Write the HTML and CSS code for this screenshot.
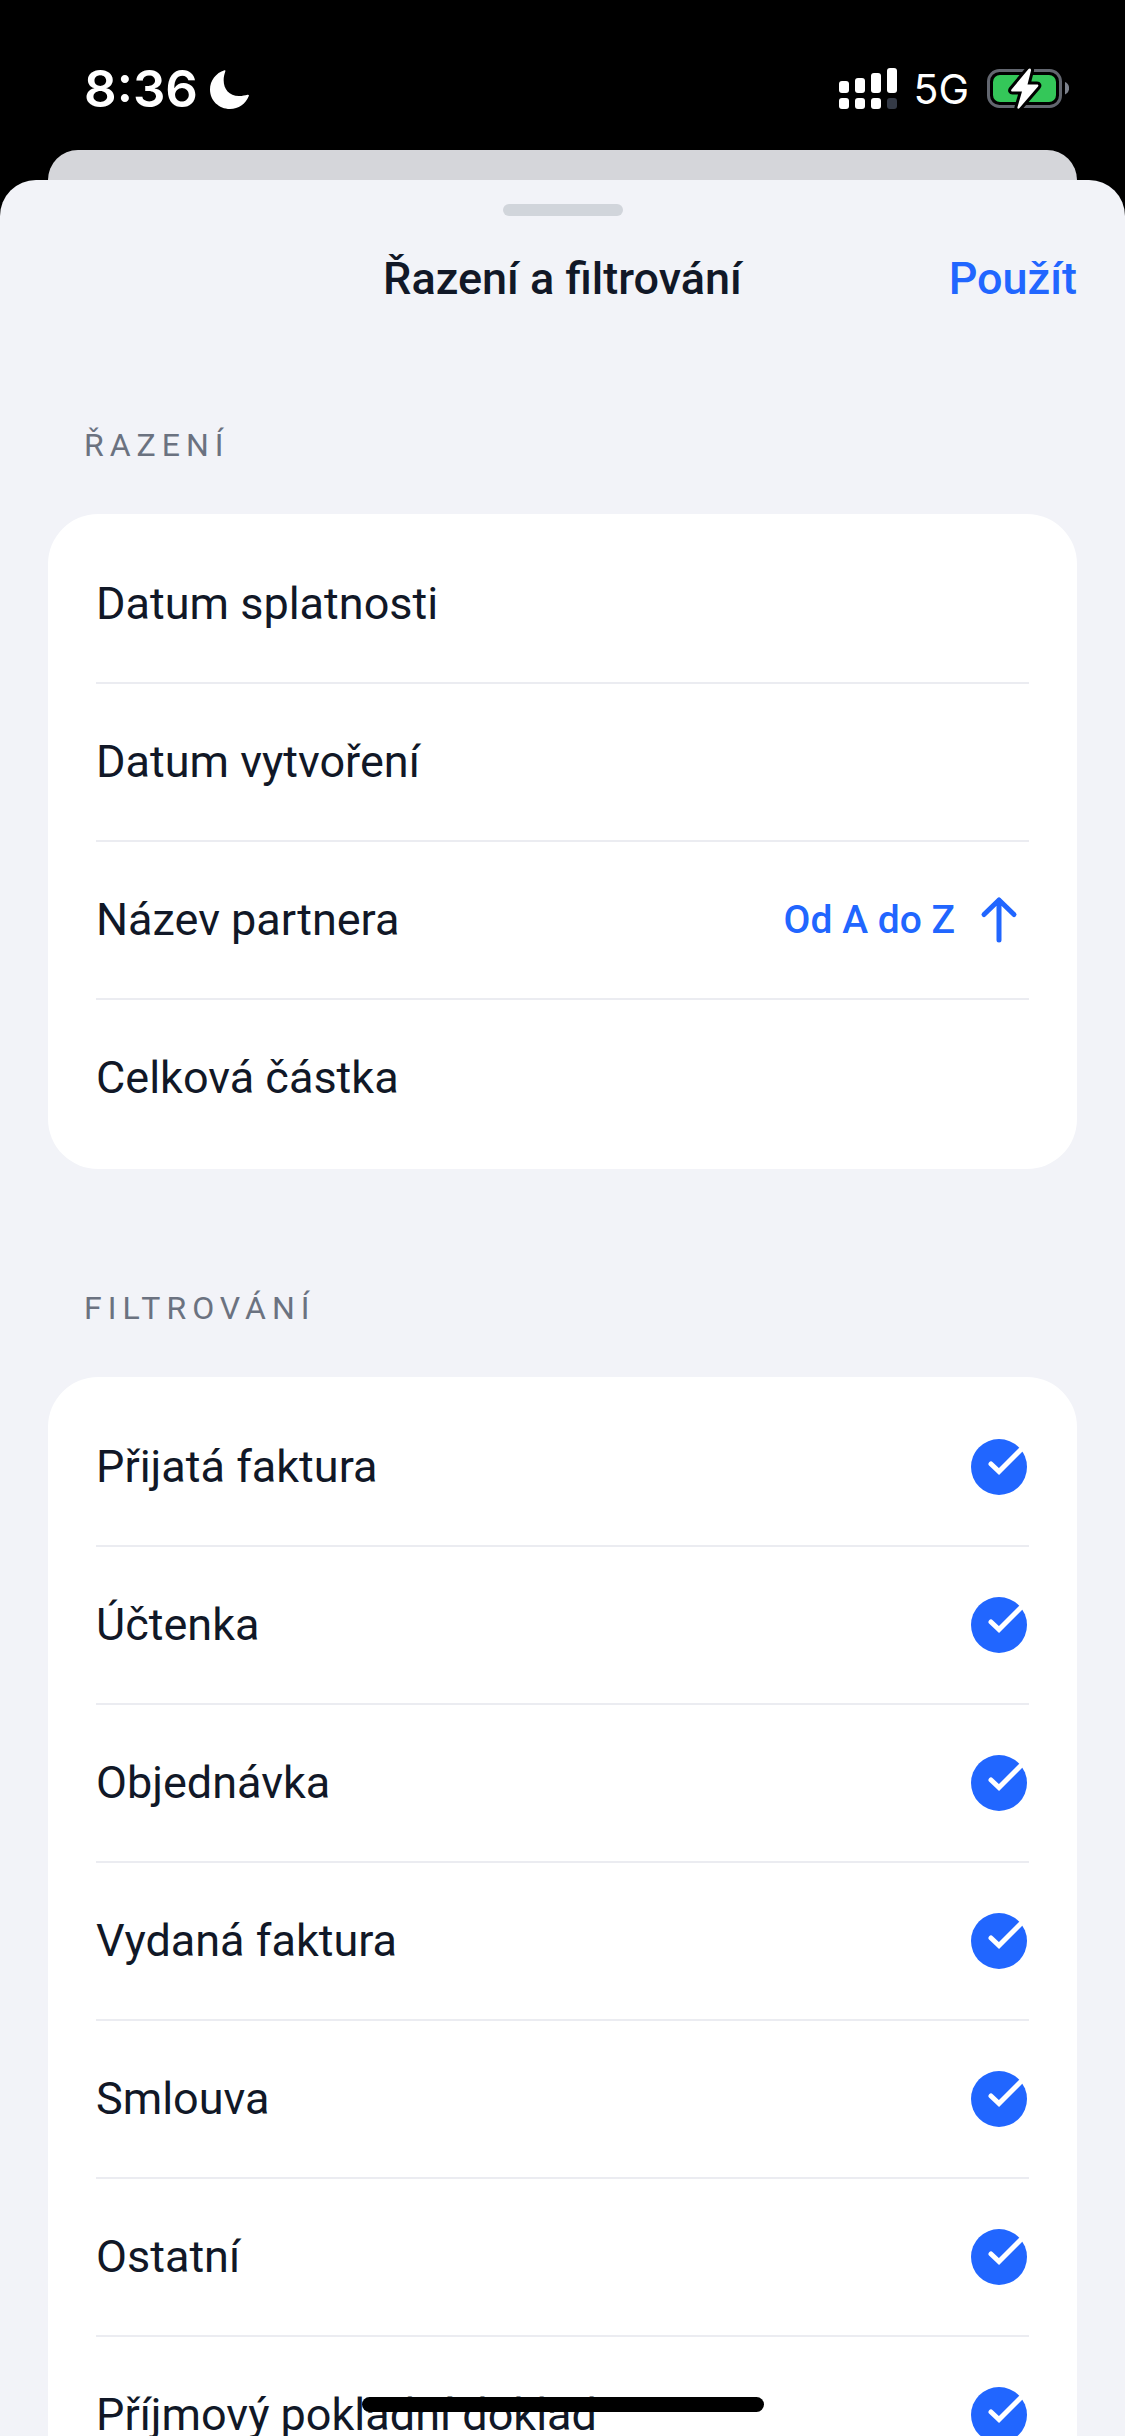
FILE: index.html
```html
<!DOCTYPE html>
<html lang="cs">
<head>
<meta charset="utf-8">
<meta name="viewport" content="width=device-width, initial-scale=1">
<title>Řazení a filtrování</title>
<link rel="stylesheet" href="styles.css">
</head>
<body>
<svg class="symbols" aria-hidden="true">
  <symbol id="check" viewBox="0 0 56 56">
    <mask id="tick">
      <rect width="56" height="56" fill="#fff"/>
      <path d="M20 25l8 7.500L49 11.500 58 2.500" fill="none" stroke="#000" stroke-width="5" stroke-linecap="round"/>
    </mask>
    <circle cx="28" cy="28" r="28" fill="currentColor" mask="url(#tick)"/>
  </symbol>
</svg>
<div class="app">
  <div class="status">
    <div class="status-group">
      <span class="time">8:36</span>
      <svg class="moon" viewBox="0 0 39 39" aria-hidden="true"><path d="M14.500 0.200C15.600 0 15.600.8 15.200 1.800 10.800 14 16 25.800 29 26 32.500 26 35 25.200 37.500 24.700 38.900 24.500 39.200 25.200 38.700 26.300 35.500 34 28.500 39 20 39 8.800 39 0 30.500 0 19.500 0 10.500 6 2.800 14.500.2Z" fill="#fff"/></svg>
    </div>
    <div class="status-group">
      <svg class="signal" viewBox="0 0 58 42" aria-hidden="true" fill="#fff">
        <rect x="0" y="13" width="10" height="12" rx="3"/><rect x="16" y="10" width="10" height="15" rx="3"/><rect x="32" y="5" width="10" height="20" rx="3"/><rect x="48" y="0" width="10" height="25" rx="3"/>
        <rect x="0" y="30" width="10" height="11" rx="3"/><rect x="16" y="30" width="10" height="11" rx="3"/><rect x="32" y="30" width="10" height="11" rx="3"/><rect x="48" y="30" width="10" height="11" rx="3" fill="#343a46"/>
      </svg>
      <span class="network">5G</span>
      <svg class="battery" viewBox="0 0 82 42" aria-hidden="true">
        <rect x="1.500" y="2.500" width="72" height="36" rx="11" fill="none" stroke="#62666f" stroke-width="3"/>
        <rect x="6" y="7" width="63" height="27" rx="7" fill="#34c759"/>
        <path d="M78 14c5.500 2 5.500 10.500 0 12.500z" fill="#7d828c"/>
        <path d="M41.500 1L24.500 21.500c-.8 1-.3 2 1 2h9.500L30.500 39c-.5 1.800 1 2.300 2 1L51 18.500c.8-1 .3-2-1-2h-9.500L44 2.500c.4-1.800-1.400-2.800-2.500-1.500z" fill="#fff" stroke="#000" stroke-width="6" paint-order="stroke"/>
      </svg>
    </div>
  </div>
  <div class="behind"></div>
  <main class="sheet">
    <div class="handle"></div>
    <header class="bar">
      <h1 class="title">Řazení a filtrování</h1>
      <button class="apply" type="button">Použít</button>
    </header>
    <section class="section">
      <h2 class="label">ŘAZENÍ</h2>
      <div class="card">
        <button class="row" type="button">Datum splatnosti</button>
        <button class="row" type="button">Datum vytvoření</button>
        <button class="row" type="button">Název partnera
          <span class="order">Od A do Z
            <svg class="arrow" viewBox="0 0 60 60" aria-hidden="true"><path d="M30 50V10M15 24.500L30 10l15 14.500" fill="none" stroke="currentColor" stroke-width="5" stroke-linecap="round" stroke-linejoin="round"/></svg>
          </span>
        </button>
        <button class="row" type="button">Celková částka</button>
      </div>
    </section>
    <section class="section">
      <h2 class="label">FILTROVÁNÍ</h2>
      <div class="card">
        <label class="row">Přijatá faktura<span class="tick"><input type="checkbox" checked><svg><use href="#check"/></svg></span></label>
        <label class="row">Účtenka<span class="tick"><input type="checkbox" checked><svg><use href="#check"/></svg></span></label>
        <label class="row">Objednávka<span class="tick"><input type="checkbox" checked><svg><use href="#check"/></svg></span></label>
        <label class="row">Vydaná faktura<span class="tick"><input type="checkbox" checked><svg><use href="#check"/></svg></span></label>
        <label class="row">Smlouva<span class="tick"><input type="checkbox" checked><svg><use href="#check"/></svg></span></label>
        <label class="row">Ostatní<span class="tick"><input type="checkbox" checked><svg><use href="#check"/></svg></span></label>
        <label class="row">Příjmový pokladní doklad<span class="tick"><input type="checkbox" checked><svg><use href="#check"/></svg></span></label>
      </div>
    </section>
  </main>
</div>
<div class="home"></div>
</body>
</html>
```
FILE: styles.css
```css
* {
  box-sizing: border-box;
}

body {
  margin: 0;
  background: #000;
  color: #111827;
  font-family: Roboto, "Liberation Sans", sans-serif;
  font-size: 45px;
  line-height: 56px;
}

button {
  border: 0;
  background: none;
  color: inherit;
  font: inherit;
  text-align: left;
  cursor: pointer;
}

.symbols {
  position: absolute;
  width: 0;
  height: 0;
}

.app {
  display: flex;
  flex-direction: column;
  height: 100vh;
  overflow: hidden;
}

/* Status bar */
.status {
  display: flex;
  flex: none;
  justify-content: space-between;
  padding: 61px 56px 33px 84px;
  color: #fff;
  font-family: Inter, "Liberation Sans", sans-serif;
}

.status-group {
  display: flex;
  align-items: center;
}

.time {
  font-size: 51px;
  font-weight: 600;
}

.moon {
  width: 39px;
  height: 39px;
  margin-left: 12px;
}

.signal {
  width: 58px;
  height: 42px;
}

.network {
  margin: 0 18px 0 16px;
  font-size: 41px;
}

.battery {
  width: 82px;
  height: 42px;
}

/* Sheets */
.behind {
  flex: none;
  height: 64px;
  margin: 0 48px -34px;
  border-radius: 30px 30px 0 0;
  background: #d5d6da;
}

.sheet {
  flex: 1;
  min-height: 0;
  overflow-y: auto;
  scrollbar-width: none;
  padding: 24px 48px 0;
  border-radius: 36px 36px 0 0;
  background: #f2f3f8;
}

.handle {
  width: 120px;
  height: 12px;
  margin: 0 auto;
  border-radius: 6px;
  background: #d1d5db;
}

.bar {
  display: grid;
  grid-template-columns: 1fr auto 1fr;
  align-items: center;
  padding-top: 36px;
  line-height: 54px;
}

.title {
  grid-column: 2;
  margin: 0;
  font-size: 45px;
  font-weight: 500;
}

.apply {
  justify-self: end;
  padding: 0;
  color: #2166ff;
  font-weight: 500;
}

.label {
  margin: 0;
  padding: 118px 36px 48px;
  color: #6b7280;
  font-size: 32px;
  font-weight: 400;
  line-height: 42px;
  letter-spacing: 6px;
}

.card {
  padding: 12px 48px 11px;
  border-radius: 50px;
  background: #fff;
}

.row {
  display: flex;
  align-items: center;
  justify-content: space-between;
  width: 100%;
  height: 158px;
  padding: 0;
  border-bottom: 2px solid #ebecf1;
  cursor: pointer;
}

.row:last-child {
  border-bottom-color: transparent;
}

.order {
  display: flex;
  align-items: center;
  gap: 14px;
  color: #2166ff;
  font-size: 39px;
  font-weight: 500;
}

.arrow {
  width: 60px;
  height: 60px;
}

.tick {
  display: grid;
  margin-right: 2px;
  color: #2166ff;
}

.tick input,
.tick svg {
  grid-area: 1 / 1;
  width: 56px;
  height: 56px;
  margin: 0;
}

.tick input {
  appearance: none;
  border: 3px solid #d1d5db;
  border-radius: 50%;
}

.tick input:checked {
  border-color: transparent;
}

.tick svg {
  visibility: hidden;
  pointer-events: none;
}

.tick input:checked + svg {
  visibility: visible;
}

.home {
  position: fixed;
  bottom: 24px;
  left: 50%;
  width: 402px;
  height: 15px;
  margin-left: -201px;
  border-radius: 8px;
  background: #000;
}
```
